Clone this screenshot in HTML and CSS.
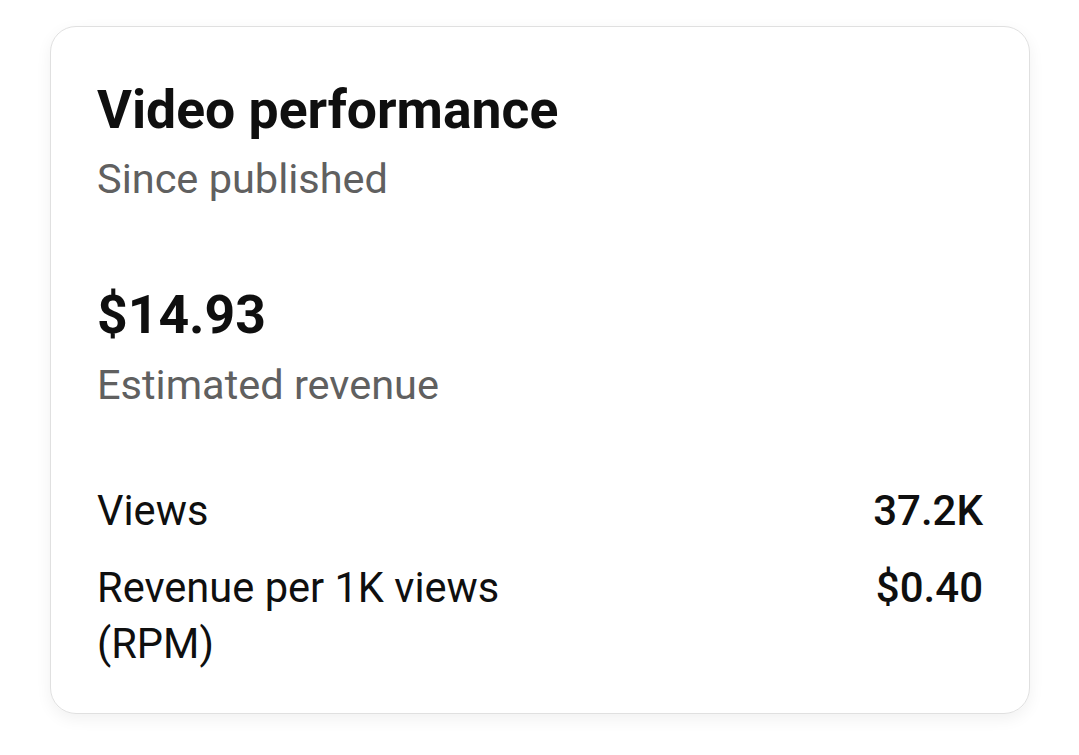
FILE: index.html
```html
<!DOCTYPE html>
<html>
<head>
<meta charset="utf-8">
<link rel="stylesheet" href="styles.css">
</head>
<body>
<div class="card">
  <div class="title">Video performance</div>
  <div class="sub sub-first">Since published</div>
  <div class="amount">$14.93</div>
  <div class="sub sub-second">Estimated revenue</div>
  <div class="stats">
    <div class="row"><div class="label">Views</div><div class="val">37.2K</div></div>
    <div class="row"><div class="label">Revenue per 1K views<br>(RPM)</div><div class="val">$0.40</div></div>
  </div>
</div>
</body>
</html>
```
FILE: styles.css
```css
html, body { margin: 0; padding: 0; background: #fff; }
body { font-family: Roboto, "Noto Sans", sans-serif; width: 1079px; height: 755px; overflow: hidden; }
.card {
  margin: 26px 0 0 50px;
  width: 980px;
  height: 688px;
  box-sizing: border-box;
  border: 1px solid #e0e0e0;
  border-radius: 26px;
  box-shadow: 0 5px 16px rgba(0,0,0,0.06);
  padding: 51px 46px 0 46px;
}
.title { font-size: 53.5px; font-weight: 700; color: #0f0f0f; line-height: 64px; }
.sub { font-size: 41.5px; color: #606060; line-height: 50px; }
.sub-first { margin-top: 12px; }
.amount { font-size: 53.5px; font-weight: 700; color: #0f0f0f; line-height: 64px; margin-top: 79px; }
.sub-second { margin-top: 13px; }
.stats { margin-top: 73px; display: flex; flex-direction: column; gap: 21px; }
.row { display: flex; justify-content: space-between; align-items: flex-start; }
.label, .val { font-size: 41.6px; color: #0f0f0f; line-height: 56px; }
.val { font-size: 42px; font-weight: 500; }
```
